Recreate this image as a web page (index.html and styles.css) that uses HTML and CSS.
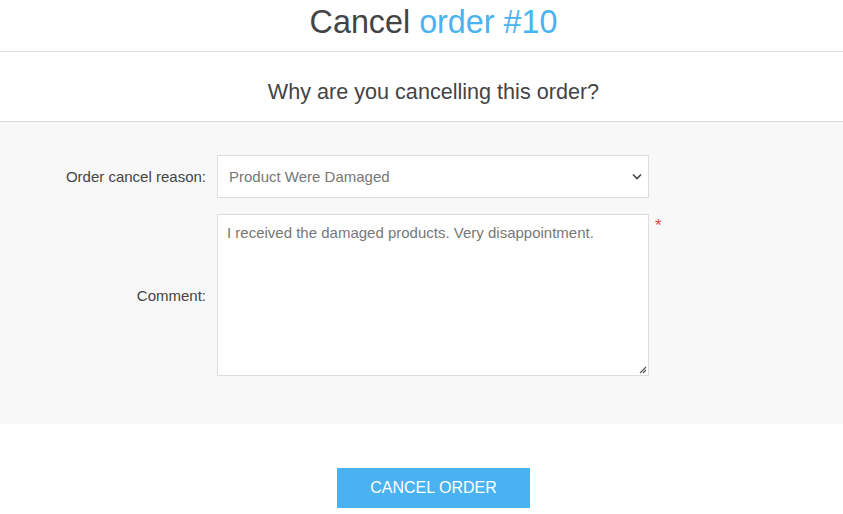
FILE: index.html
```html
<!DOCTYPE html>
<html>
<head>
<meta charset="utf-8">
<link rel="stylesheet" href="styles.css">
</head>
<body>
<div class="page-title">
  <h1>Cancel <span class="accent">order #10</span></h1>
</div>
<div class="question">
  <h2>Why are you cancelling this order?</h2>
</div>
<div class="form-area">
  <div class="row">
    <label class="lbl">Order cancel reason:</label>
    <div class="field">
      <div class="select">
        <span>Product Were Damaged</span>
        <svg class="chev" width="10" height="7" viewBox="0 0 10 7"><path d="M1 1.5 L5 5.5 L9 1.5" fill="none" stroke="#444" stroke-width="1.6"/></svg>
      </div>
    </div>
  </div>
  <div class="row row-comment">
    <label class="lbl">Comment:</label>
    <div class="field">
      <div class="textarea">
        <span>I received the damaged products. Very disappointment.</span>
        <svg class="grip" width="8" height="8" viewBox="0 0 8 8"><path d="M7 1 L1 7 M7 4 L4 7" stroke="#555" stroke-width="1.2"/></svg>
      </div>
      <span class="required">*</span>
    </div>
  </div>
</div>
<div class="actions">
  <button class="btn">CANCEL ORDER</button>
</div>
</body>
</html>
```

FILE: styles.css
```css
* { box-sizing: border-box; }
body {
  margin: 0;
  font-family: "Liberation Sans", Arial, sans-serif;
  color: #444;
  background: #fff;
}
.page-title {
  height: 52px;
  border-bottom: 1px solid #ddd;
  text-align: center;
  padding-left: 24px;
}
.page-title h1 {
  margin: 0;
  font-size: 32.3px;
  font-weight: normal;
  line-height: 44px;
  color: #444;
}
.accent { color: #4ab2f1; }
.question {
  height: 70px;
  border-bottom: 1px solid #ddd;
  text-align: center;
  padding-left: 24px;
}
.question h2 {
  margin: 0;
  padding-top: 28px;
  font-size: 21.6px;
  line-height: 24px;
  font-weight: normal;
  color: #444;
}
.form-area {
  background: #f8f8f8;
  padding: 33px 0 48px;
  display: flex;
  flex-direction: column;
  gap: 16px;
}
.row {
  display: flex;
  align-items: center;
}
.lbl {
  width: 217px;
  padding-right: 11px;
  text-align: right;
  font-size: 15px;
  color: #444;
}
.field {
  display: flex;
  align-items: flex-start;
  gap: 6px;
}
.select {
  width: 432px;
  height: 43px;
  background: #fff;
  border: 1px solid #ddd;
  display: flex;
  align-items: center;
  justify-content: space-between;
  padding: 0 6px 0 11px;
  font-size: 15px;
  color: #777;
}
.textarea {
  position: relative;
  width: 432px;
  height: 162px;
  background: #fff;
  border: 1px solid #ddd;
  padding: 9px 9px;
  font-size: 15px;
  color: #777;
}
.grip {
  position: absolute;
  right: 1px;
  bottom: 1px;
}
.required {
  color: #e4434b;
  font-size: 17px;
  line-height: 16px;
  margin-top: 4px;
}
.actions {
  padding-top: 44px;
  display: flex;
  justify-content: center;
}
.btn {
  width: 193px;
  height: 40px;
  border: none;
  background: #4ab2f1;
  color: #fff;
  font-family: "Liberation Sans", Arial, sans-serif;
  font-size: 16px;
  margin-left: 24px;
}
```
